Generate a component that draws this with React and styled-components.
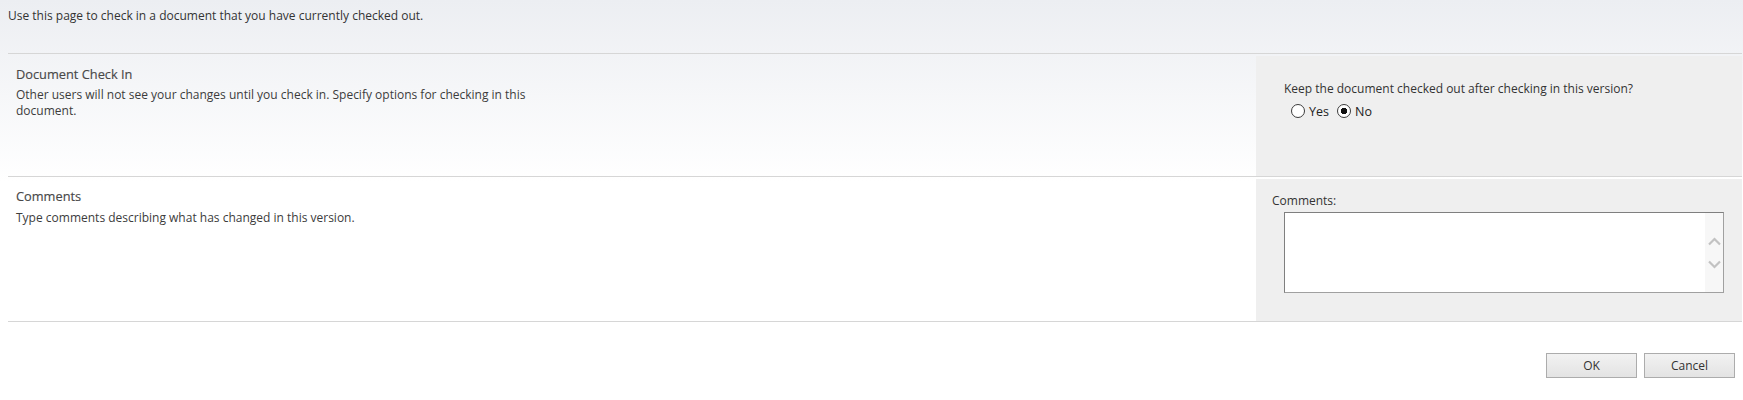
import React from "react";
import styled, { createGlobalStyle } from "styled-components";

const Global = createGlobalStyle`
  html, body { margin: 0; padding: 0; }
  body {
    background: #ffffff linear-gradient(to bottom, #eceef2 0px, #ffffff 182px) no-repeat;
    font-family: "Open Sans", "Noto Sans", sans-serif;
    font-size: 12px;
    color: #333;
  }
`;

const Page = styled.div`
  width: 1743px;
  padding: 0 1px 0 8px;
  box-sizing: border-box;
`;

const Intro = styled.div`
  height: 53px;
  padding-top: 8px;
  box-sizing: border-box;
  line-height: 16px;
  color: #333;
`;

const Table = styled.div`
  border-bottom: 1px solid #d6d6d6;
`;

const Row = styled.div`
  display: grid;
  grid-template-columns: 1fr 486px;
  border-top: 1px solid #d6d6d6;
  padding-top: 2px;
  height: ${(p) => p.$h}px;
  box-sizing: border-box;
`;

const Label = styled.div`
  padding: ${(p) => p.$pt}px 8px 0 8px;
`;

const Heading = styled.h3`
  margin: 0 0 ${(p) => p.$gap}px 0;
  font-size: 12.8px;
  font-weight: 400;
  line-height: 16px;
  color: #484848;
  -webkit-text-stroke: 0.15px #484848;
`;

const Desc = styled.div`
  max-width: 530px;
  line-height: 16px;
  color: #3c3c3c;
`;

const Control = styled.div`
  background: #efefef;
  padding: ${(p) => p.$pt}px 18px 0 ${(p) => p.$pl}px;
`;

const Question = styled.div`
  line-height: 16px;
  color: #333;
  margin-bottom: 4px;
`;

const RadioRow = styled.div`
  display: flex;
  align-items: center;
  height: 20px;
  padding-left: 7px;
`;

const RadioLabel = styled.label`
  display: flex;
  align-items: center;
  gap: 4px;
  margin-right: 8px;
  color: #222;
  font-size: 12.5px;
`;

const Radio = styled.input.attrs({ type: "radio" })`
  appearance: none;
  -webkit-appearance: none;
  margin: 0;
  width: 14px;
  height: 14px;
  border: 1px solid #3c3c3c;
  border-radius: 50%;
  background: #fff;
  box-sizing: border-box;
  &:checked {
    background: radial-gradient(circle, #111 0 3px, #fff 3.5px);
  }
`;

const FieldLabel = styled.div`
  line-height: 16px;
  color: #333;
  margin-bottom: 3px;
`;

const AreaBox = styled.div`
  display: flex;
  margin-left: 12px;
  height: 81px;
  border: 1px solid #7f7f7f;
  border-right-color: #a0a0a0;
  border-bottom-color: #a0a0a0;
  background: #fff;
  box-sizing: border-box;
`;

const Area = styled.textarea`
  flex: 1;
  border: 0;
  resize: none;
  outline: none;
  padding: 2px;
  font-family: inherit;
  font-size: 12px;
`;

const ScrollTrack = styled.div`
  width: 18px;
  background: #f7f7f7;
  display: flex;
  flex-direction: column;
  align-items: center;
  justify-content: center;
  gap: 14px;
`;

const Buttons = styled.div`
  display: flex;
  justify-content: flex-end;
  gap: 7px;
  padding: 31px 7px 0 0;
`;

const Button = styled.button`
  width: ${(p) => p.$w}px;
  height: 25px;
  border: 1px solid #acacac;
  background: linear-gradient(to bottom, #f2f2f2, #e3e3e3);
  font-family: "Open Sans", "Noto Sans", sans-serif;
  font-size: 12px;
  color: #333;
  padding: 0;
`;

const Chevron = ({ down }) => (
  <svg width="13" height="9" viewBox="0 0 13 9">
    <path
      d={down ? "M1 1.5 L6.5 7 L12 1.5" : "M1 7.5 L6.5 2 L12 7.5"}
      fill="none"
      stroke="#c2c2c2"
      strokeWidth="2.2"
    />
  </svg>
);

export default function App() {
  return (
    <>
      <Global />
      <Page>
        <Intro>Use this page to check in a document that you have currently checked out.</Intro>
        <Table>
          <Row $h={123}>
            <Label $pt={10}>
              <Heading $gap={5}>Document Check In</Heading>
              <Desc>
                Other users will not see your changes until you check in. Specify options for checking in this
                document.
              </Desc>
            </Label>
            <Control $pt={25} $pl={28}>
              <Question>Keep the document checked out after checking in this version?</Question>
              <RadioRow>
                <RadioLabel>
                  <Radio name="keep" value="yes" />
                  Yes
                </RadioLabel>
                <RadioLabel>
                  <Radio name="keep" value="no" defaultChecked />
                  No
                </RadioLabel>
              </RadioRow>
            </Control>
          </Row>
          <Row $h={145}>
            <Label $pt={9}>
              <Heading $gap={6}>Comments</Heading>
              <Desc>Type comments describing what has changed in this version.</Desc>
            </Label>
            <Control $pt={14} $pl={16}>
              <FieldLabel>Comments:</FieldLabel>
              <AreaBox>
                <Area />
                <ScrollTrack>
                  <Chevron />
                  <Chevron down />
                </ScrollTrack>
              </AreaBox>
            </Control>
          </Row>
        </Table>
        <Buttons>
          <Button $w={91}>OK</Button>
          <Button $w={91}>Cancel</Button>
        </Buttons>
      </Page>
    </>
  );
}
